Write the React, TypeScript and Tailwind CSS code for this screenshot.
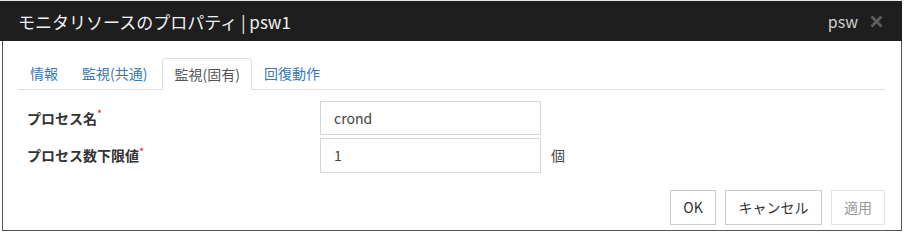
import React from "react";

const font = { fontFamily: '"Noto Sans CJK JP", "Noto Sans", sans-serif' };

export default function App() {
  return (
    <div className="w-[904px] h-[234px] bg-white relative" style={font}>
      <div className="h-[1px] bg-[#e5e5e5] w-[902px]" />
      <div className="w-[902px] h-[40px] bg-[#1e1e1e] flex items-center justify-between pl-[18px] pr-[19px]">
        <span className="text-[17px] text-[#f2f2f2] leading-none">モニタリソースのプロパティ | psw1</span>
        <div className="flex items-center gap-[12px]">
          <span className="text-[16px] text-[#cfcfcf] leading-none">psw</span>
          <svg width="13" height="13" viewBox="0 0 13 13">
            <path d="M1.5 1.5 L11.5 11.5 M11.5 1.5 L1.5 11.5" stroke="#5e5e5e" strokeWidth="2.8" strokeLinecap="butt" />
          </svg>
        </div>
      </div>
      <div className="ml-[2px] w-[900px] h-[190px] border-l border-r border-b border-[#555] pt-[17px] px-[15px] flex flex-col">
        <div className="flex border-b border-[#dddddd] h-[32px] w-[867px] text-[14px]">
          <div className="px-3 flex items-center text-[#337ab7]">情報</div>
          <div className="px-3 flex items-center text-[#337ab7]">監視(共通)</div>
          <div className="px-[11px] flex items-center text-[#555] bg-white border border-[#dddddd] border-b-white rounded-t-[4px] -mb-px ml-[3px]">監視(固有)</div>
          <div className="px-3 flex items-center text-[#337ab7]">回復動作</div>
        </div>
        <div className="mt-[11px] flex flex-col gap-[3px] pl-[9px]">
          <div className="flex items-center">
            <div className="w-[293px] text-[14px] font-bold text-[#333]">
              プロセス名<sup className="text-[#c9302c] text-[11px] font-normal">*</sup>
            </div>
            <div className="w-[221px] h-[34px] border border-[#d6d6d6] flex items-center px-[13px] text-[14px] text-[#444]">crond</div>
          </div>
          <div className="flex items-center">
            <div className="w-[293px] text-[14px] font-bold text-[#333]">
              プロセス数下限値<sup className="text-[#c9302c] text-[11px] font-normal">*</sup>
            </div>
            <div className="w-[221px] h-[35px] border border-[#d6d6d6] flex items-center px-[13px] text-[14px] text-[#444]">1</div>
            <span className="ml-[10px] text-[14px] text-[#444]">個</span>
          </div>
        </div>
        <div className="mt-[17px] flex justify-end gap-[9px] w-[867px] text-[14px]">
          <div className="w-[46px] h-[35px] border border-[#cccccc] flex items-center justify-center text-[#333]">OK</div>
          <div className="w-[97px] h-[35px] border border-[#cccccc] flex items-center justify-center text-[#333]">キャンセル</div>
          <div className="w-[54px] h-[35px] border border-[#e3e3e3] flex items-center justify-center text-[#999]">適用</div>
        </div>
      </div>
    </div>
  );
}
